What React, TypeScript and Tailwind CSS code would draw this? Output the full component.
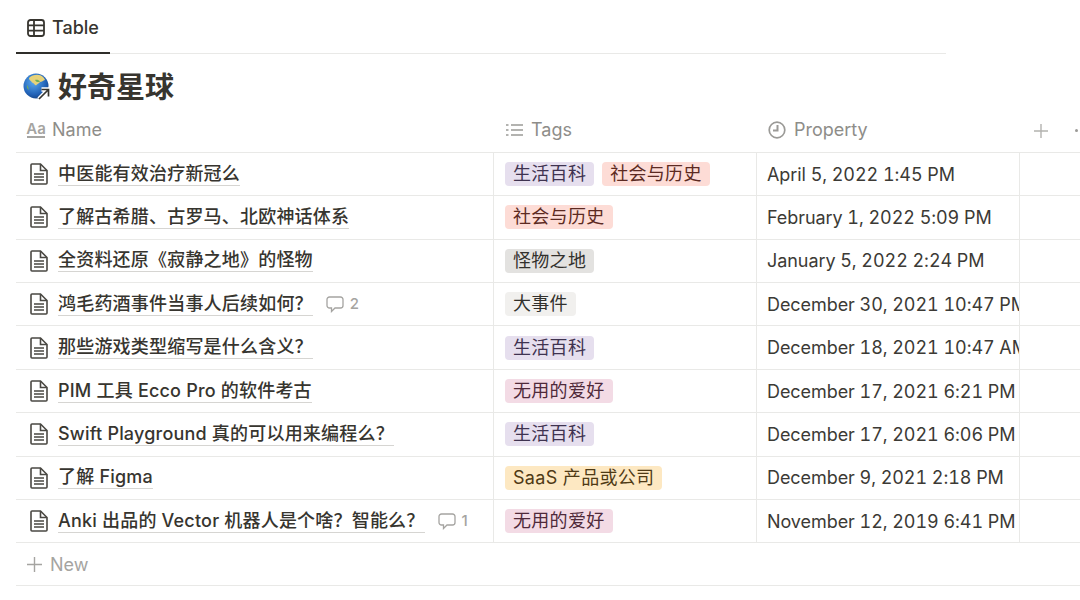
const FONT = "font-['Inter','Noto_Sans_CJK_SC',sans-serif]";

type Tag = { label: string; color: string };

const LIFE = { label: "生活百科", color: "bg-[#e6dfee] text-[#3f3350]" };
const HISTORY = { label: "社会与历史", color: "bg-[#fddcd6] text-[#5c2a22]" };
const MONSTER = { label: "怪物之地", color: "bg-[#e3e2e0] text-[#32302c]" };
const EVENT = { label: "大事件", color: "bg-[#f1f0ee] text-[#32302c]" };
const HOBBY = { label: "无用的爱好", color: "bg-[#f3dbe5] text-[#4f2a3a]" };
const SAAS = { label: "SaaS 产品或公司", color: "bg-[#fde8c2] text-[#4f3a15]" };

const ROWS: { name: string; tags: Tag[]; date: string; comments?: number }[] = [
  { name: "中医能有效治疗新冠么", tags: [LIFE, HISTORY], date: "April 5, 2022 1:45 PM" },
  { name: "了解古希腊、古罗马、北欧神话体系", tags: [HISTORY], date: "February 1, 2022 5:09 PM" },
  { name: "全资料还原《寂静之地》的怪物", tags: [MONSTER], date: "January 5, 2022 2:24 PM" },
  { name: "鸿毛药酒事件当事人后续如何\uFF1F", tags: [EVENT], date: "December 30, 2021 10:47 PM", comments: 2 },
  { name: "那些游戏类型缩写是什么含义\uFF1F", tags: [LIFE], date: "December 18, 2021 10:47 AM" },
  { name: "PIM 工具 Ecco Pro 的软件考古", tags: [HOBBY], date: "December 17, 2021 6:21 PM" },
  { name: "Swift Playground 真的可以用来编程么\uFF1F", tags: [LIFE], date: "December 17, 2021 6:06 PM" },
  { name: "了解 Figma", tags: [SAAS], date: "December 9, 2021 2:18 PM" },
  { name: "Anki 出品的 Vector 机器人是个啥\uFF1F智能么\uFF1F", tags: [HOBBY], date: "November 12, 2019 6:41 PM", comments: 1 },
];

function TableIcon() {
  return (
    <svg width="18" height="18" viewBox="0 0 18 18" fill="none" stroke="#37352f" strokeWidth="1.8" className="shrink-0">
      <rect x="1" y="1" width="16" height="16" rx="2.5" />
      <path d="M1 6.300h16M1 11.700h16M7 1v16" />
    </svg>
  );
}

function PageIcon() {
  return (
    <svg width="18" height="22" viewBox="0 0 18 22" fill="none" stroke="#4a4843" strokeWidth="1.600" className="shrink-0">
      <path d="M1 2a1 1 0 0 1 1-1h8.500L17 7.500V20a1 1 0 0 1-1 1H2a1 1 0 0 1-1-1z" />
      <path d="M10.500 1v6.500H17" />
      <path d="M4 11h10M4 14h10M4 17h10" strokeWidth="1.400" />
    </svg>
  );
}

function Globe() {
  return (
    <svg width="29" height="29" viewBox="0 0 29 29" className="shrink-0">
      <defs>
        <radialGradient id="sea" cx="0.4" cy="0.35" r="0.75">
          <stop offset="0" stopColor="#5aa9ee" />
          <stop offset="0.65" stopColor="#2263b8" />
          <stop offset="1" stopColor="#123a78" />
        </radialGradient>
      </defs>
      <circle cx="13" cy="13" r="12.500" fill="url(#sea)" />
      <path d="M6 5c3-3 8-4 12-2.500 2 1 3.500 3 4 4.500-2 .5-3 2-5 2-1 2-3 1.500-4 3.500-2-.5-2-3-4-3-1-2-3-2-3-4.500z" fill="#e6d27a" />
      <path d="M12 7c2-.5 4 0 5 1.500-1.500 1-3.500 1-5-1.500zM4 12c1 1 2 3 1.500 5-1-1-2-3-1.500-5z" fill="#6fae5a" />
      <path d="M16 26l9-9M18.500 16.500h7v7" fill="none" stroke="#fff" strokeWidth="4.500" />
      <path d="M16 26l9-9M18.500 16.500h7v7" fill="none" stroke="#37352f" strokeWidth="1.700" />
    </svg>
  );
}

function AaIcon() {
  return (
    <span className="flex w-[20px] shrink-0 flex-col items-center text-[15px] font-semibold leading-[13px] text-[#a5a4a1]">
      Aa
      <span className="mt-[1px] h-[1.500px] w-[18px] bg-[#a5a4a1]" />
    </span>
  );
}

function ListIcon() {
  return (
    <svg width="17" height="14" viewBox="0 0 17 14" fill="none" stroke="#9b9a97" strokeWidth="1.700" className="shrink-0">
      <path d="M5 2h12M5 7h12M5 12h12M0 2h2.500M0 7h2.500M0 12h2.500" />
    </svg>
  );
}

function ClockIcon() {
  return (
    <svg width="18" height="18" viewBox="0 0 18 18" fill="none" stroke="#9b9a97" className="shrink-0">
      <circle cx="9" cy="9" r="7.800" strokeWidth="1.700" />
      <path d="M9.500 4v5.500H5" strokeWidth="2" />
    </svg>
  );
}

function CommentIcon() {
  return (
    <svg width="18" height="17" viewBox="0 0 18 17" fill="none" stroke="#a5a4a1" strokeWidth="1.300" className="shrink-0">
      <path d="M3.500 1h11A2.500 2.500 0 0 1 17 3.500v6a2.500 2.500 0 0 1-2.500 2.500H9l-3.500 3.500V12h-2A2.500 2.500 0 0 1 1 9.500v-6A2.500 2.500 0 0 1 3.500 1z" />
    </svg>
  );
}

export default function App() {
  return (
    <div className={`${FONT} h-[600px] w-[1080px] overflow-hidden bg-white pl-4 text-[#37352f]`}>
      {/* Tab bar */}
      <div className="flex h-[54px] w-[930px] items-end border-b border-[#e9e9e7]">
        <div className="mb-[-1px] flex h-[35px] w-[94px] items-start gap-[7px] border-b-2 border-[#2f2e2a] pl-[11px]">
          <TableIcon />
          <span className="text-[18px] font-medium leading-[18px] text-[#37352f]">Table</span>
        </div>
      </div>

      {/* Title */}
      <div className="flex h-[65px] items-center gap-[6px] pl-[7px] pt-[1px]">
        <Globe />
        <h1 className="text-[29px] font-bold leading-none text-[#37352f]">好奇星球</h1>
      </div>

      {/* Header */}
      <div className="flex h-[33.800px] items-start border-b border-[#e9e9e7] text-[18px] leading-[22px] text-[#8e8d89]">
        <div className="flex w-[478px] shrink-0 items-center gap-[6px] pl-[10px]">
          <AaIcon />
          Name
        </div>
        <div className="flex w-[263px] shrink-0 items-center gap-[8px] pl-[12px]">
          <ListIcon />
          Tags
        </div>
        <div className="flex w-[263px] shrink-0 items-center gap-[8px] pl-[11px]">
          <ClockIcon />
          Property
        </div>
        <svg width="16" height="16" viewBox="0 0 16 16" stroke="#b3b2af" strokeWidth="1.400" className="ml-[13px] mt-[4px] shrink-0">
          <path d="M8 1v14M1 8h14" />
        </svg>
        <span className="ml-[26px] mt-[10px] h-[3px] w-[3px] shrink-0 rounded-full bg-[#9b9a97]" />
      </div>

      {/* Rows */}
      {ROWS.map((row) => (
        <div key={row.name} className="flex h-[43.420px] border-b border-[#e9e9e7]">
          <div className="flex w-[478px] shrink-0 items-center border-r border-[#e9e9e7] pl-[14px]">
            <PageIcon />
            <span className="ml-[10px] whitespace-nowrap border-b border-[#d6d5d2] text-[18px] font-medium leading-[22px] tracking-[0.2px] text-[#37352f]">
              {row.name}
            </span>
            {row.comments && (
              <span className="ml-[13px] flex items-center gap-[6px] text-[15px] font-medium text-[#a5a4a1]">
                <CommentIcon />
                {row.comments}
              </span>
            )}
          </div>
          <div className="flex w-[263px] shrink-0 items-center gap-[8px] border-r border-[#e9e9e7] pl-[11px]">
            {row.tags.map((tag) => (
              <span key={tag.label} className={`${tag.color} whitespace-nowrap rounded-[4px] px-[8px] text-[18px] leading-[24px] tracking-[0.3px]`}>
                {tag.label}
              </span>
            ))}
          </div>
          <div className="flex w-[263px] shrink-0 items-center overflow-hidden whitespace-nowrap border-r border-[#e9e9e7] pl-[10px] text-[18px] tabular-nums tracking-[-0.07px] text-[#3c3a35]">
            {row.date}
          </div>
        </div>
      ))}

      {/* New */}
      <div className="flex h-[42.600px] items-center gap-[7px] border-b border-[#e9e9e7] pl-[10px] text-[18px] text-[#a5a4a1]">
        <svg width="17" height="17" viewBox="0 0 17 17" stroke="#a5a4a1" strokeWidth="1.400">
          <path d="M8.500 1v15M1 8.500h15" />
        </svg>
        New
      </div>
    </div>
  );
}
